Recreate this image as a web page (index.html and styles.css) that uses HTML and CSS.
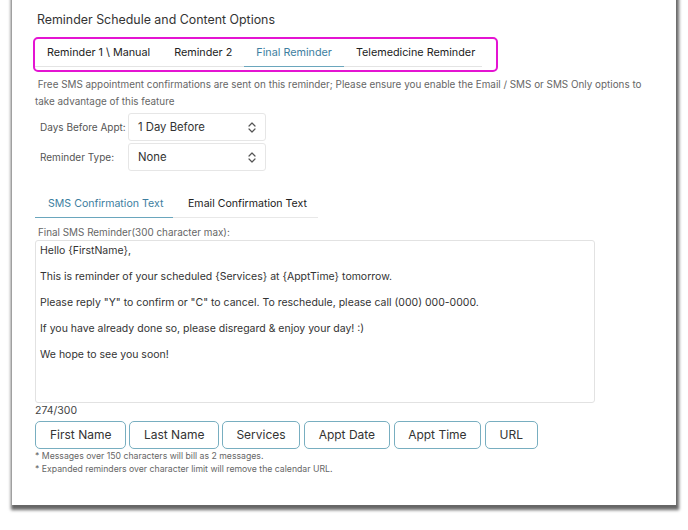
FILE: index.html
```html
<!DOCTYPE html>
<html>
<head>
<meta charset="utf-8">
<link rel="stylesheet" href="styles.css">
</head>
<body>
<div class="panel">
  <h2 class="title">Reminder Schedule and Content Options</h2>
  <div class="highlight">
    <ul class="tabs">
      <li class="tab">Reminder 1 \ Manual</li>
      <li class="tab">Reminder 2</li>
      <li class="tab active">Final Reminder</li>
      <li class="tab">Telemedicine Reminder</li>
    </ul>
  </div>
  <p class="desc">&nbsp;Free SMS appointment confirmations are sent on this reminder; Please ensure you enable the Email / SMS or SMS Only options to take advantage of this feature</p>
  <div class="form-row first">
    <label class="label">Days Before Appt:</label>
    <div class="select"><span>1 Day Before</span>
      <svg class="chev" width="8" height="11" viewBox="0 0 8 11"><path d="M1 4 L4 1 L7 4 M1 7 L4 10 L7 7" fill="none" stroke="#555" stroke-width="1.2" stroke-linecap="round" stroke-linejoin="round"/></svg>
    </div>
  </div>
  <div class="form-row">
    <label class="label">Reminder Type:</label>
    <div class="select"><span>None</span>
      <svg class="chev" width="8" height="11" viewBox="0 0 8 11"><path d="M1 4 L4 1 L7 4 M1 7 L4 10 L7 7" fill="none" stroke="#555" stroke-width="1.2" stroke-linecap="round" stroke-linejoin="round"/></svg>
    </div>
  </div>
  <ul class="tabs subtabs">
    <li class="tab active">SMS Confirmation Text</li>
    <li class="tab">Email Confirmation Text</li>
  </ul>
  <div class="field-label">Final SMS Reminder(300 character max):</div>
  <div class="textarea">
    <p>Hello {FirstName},</p>
    <p>This is reminder of your scheduled {Services} at {ApptTime} tomorrow.</p>
    <p>Please reply "Y" to confirm or "C" to cancel. To reschedule, please call (000) 000-0000.</p>
    <p>If you have already done so, please disregard &amp; enjoy your day! :)</p>
    <p>We hope to see you soon!</p>
  </div>
  <div class="count">274/300</div>
  <div class="buttons">
    <button class="btn">First Name</button>
    <button class="btn">Last Name</button>
    <button class="btn">Services</button>
    <button class="btn">Appt Date</button>
    <button class="btn">Appt Time</button>
    <button class="btn">URL</button>
  </div>
  <div class="note first-note">* Messages over 150 characters will bill as 2 messages.</div>
  <div class="note">* Expanded reminders over character limit will remove the calendar URL.</div>
</div>
</body>
</html>
```
FILE: styles.css
```css
html, body {
  margin: 0;
  padding: 0;
  background: #fff;
}
body {
  font-family: Inter, "Noto Sans", sans-serif;
  color: #333;
  width: 688px;
  height: 530px;
  overflow: hidden;
}
.panel {
  margin: -10px 0 0 12px;
  width: 664px;
  height: 515px;
  box-sizing: border-box;
  padding: 21px 0 0 23px;
  background: #fff;
  box-shadow: 1px 3px 3px 2px rgba(0,0,0,0.6);
}
.title {
  margin: 0 0 0 2px;
  font-size: 12.4px;
  font-weight: 400;
  color: #333;
  line-height: 18px;
}
.highlight {
  margin: 8px 0 0 -2px;
  width: 465px;
  height: 35px;
  box-sizing: border-box;
  border: 2.5px solid #e414d2;
  border-radius: 5px;
  padding: 0;
}
.tabs {
  list-style: none;
  margin: 0;
  padding: 0;
  display: flex;
  width: 447px;
  border-bottom: 1.5px solid #e4e4e4;
}
.tab {
  font-size: 10.8px;
  white-space: nowrap;
  flex-shrink: 0;
  padding: 7px 12px 0 12px;
  height: 20px;
  line-height: 14px;
  color: #222;
  border-bottom: 1.5px solid transparent;
  margin-bottom: -1.5px;
}
.tab.active {
  color: #3d7ea0;
  border-bottom-color: #6aa6bd;
}
.desc {
  margin: 4px 0 0 0;
  width: 620px;
  font-size: 9.9px;
  line-height: 17px;
  color: #666;
}
.form-row {
  display: flex;
  align-items: center;
  margin-top: 2px;
}
.form-row.first {
  margin-top: 3px;
}
.label {
  width: 88px;
  padding-left: 5px;
  font-size: 10px;
  color: #555;
}
.select {
  width: 138px;
  height: 28px;
  box-sizing: border-box;
  border: 1px solid #e6e6e6;
  border-radius: 3px;
  display: flex;
  align-items: center;
  justify-content: space-between;
  padding: 0 9px 0 9px;
  font-size: 11.3px;
  color: #333;
}
.chev {
  display: block;
}
.subtabs {
  margin-top: 21px;
  width: 283px;
  border-bottom-color: #e8e8e8;
}
.subtabs .tab {
  font-size: 10.6px;
  padding: 5px 0 0 13px;
  height: 20px;
}
.subtabs .tab.active {
  padding-left: 13px;
  width: 125px;
  box-sizing: content-box;
}
.subtabs .tab + .tab {
  padding-left: 15px;
}
.field-label {
  margin: 7px 0 0 3px;
  font-size: 9.9px;
  color: #666;
  line-height: 14px;
}
.textarea {
  margin-top: 1px;
  width: 560px;
  height: 163px;
  box-sizing: border-box;
  border: 1px solid #e2e2e2;
  border-radius: 3px;
  padding: 3px 4px;
  font-size: 10.5px;
  color: #333;
}
.textarea p {
  margin: 0 0 12px 0;
  line-height: 14px;
}
.count {
  margin-top: 1px;
  font-size: 10.5px;
  color: #444;
  line-height: 14px;
}
.buttons {
  display: flex;
  gap: 3px;
  margin-top: 3px;
}
.btn {
  font-family: Inter, "Noto Sans", sans-serif;
  font-size: 12px;
  color: #333;
  background: #fff;
  border: 1.5px solid #78aec0;
  border-radius: 5px;
  height: 28px;
  padding: 0 13.5px;
  margin: 0;
}
.btn:first-child {
  padding: 0 14px;
}
.btn:nth-child(4), .btn:nth-child(5), .btn:nth-child(6) {
  margin-left: 1px;
}
.note {
  font-size: 8.7px;
  color: #666;
  line-height: 13px;
}
.first-note {
  margin-top: 1px;
}
```
